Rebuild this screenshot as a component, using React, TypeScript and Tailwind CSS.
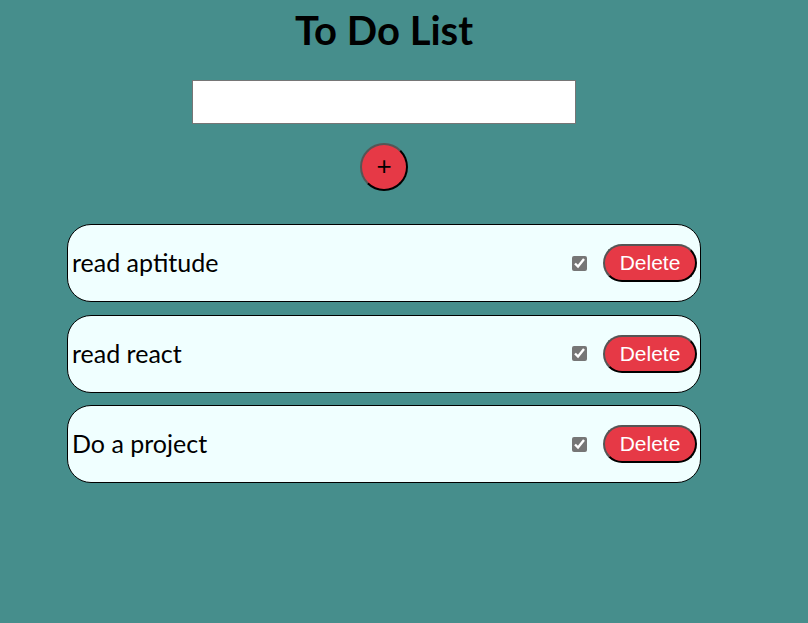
const todos = ["read aptitude", "read react", "Do a project"];

export default function App() {
  return (
    <div className="min-h-[623px] w-full bg-[#468e8c]">
      <div className="flex w-[768px] flex-col items-center">
        <h1 className="mt-[8px] text-[40px] font-bold leading-[44px] text-black [font-family:Lato,sans-serif]">
          To Do List
        </h1>
        <input
          type="text"
          className="mt-[28px] h-[44px] w-[384px] border border-[#767676] bg-white"
        />
        <button className="mt-[19px] flex h-[48px] w-[48px] items-center justify-center rounded-full border-2 border-t-[#555] border-l-[#555] border-b-black border-r-black bg-[#e63946] pb-[2px] text-[26px] leading-none text-black [font-family:'Liberation_Sans',sans-serif]">
          +
        </button>
        <div className="mt-[33px] flex w-[634px] flex-col gap-[12.5px]">
          {todos.map((t) => (
            <div
              key={t}
              className="flex h-[78px] items-center rounded-[24px] border border-black bg-[#f0ffff] pl-[4px] pr-[3px]"
            >
              <span className="flex-1 text-[25px] text-black [font-family:Lato,sans-serif]">
                {t}
              </span>
              <input
                type="checkbox"
                defaultChecked
                className="mr-[16px] h-[15px] w-[15px] accent-[#767676]"
              />
              <button className="h-[38px] w-[94px] rounded-full border-2 border-t-[#555] border-l-[#555] border-b-black border-r-black bg-[#e63946] text-[21px] text-white [font-family:'Liberation_Sans',sans-serif]">
                Delete
              </button>
            </div>
          ))}
        </div>
      </div>
    </div>
  );
}
